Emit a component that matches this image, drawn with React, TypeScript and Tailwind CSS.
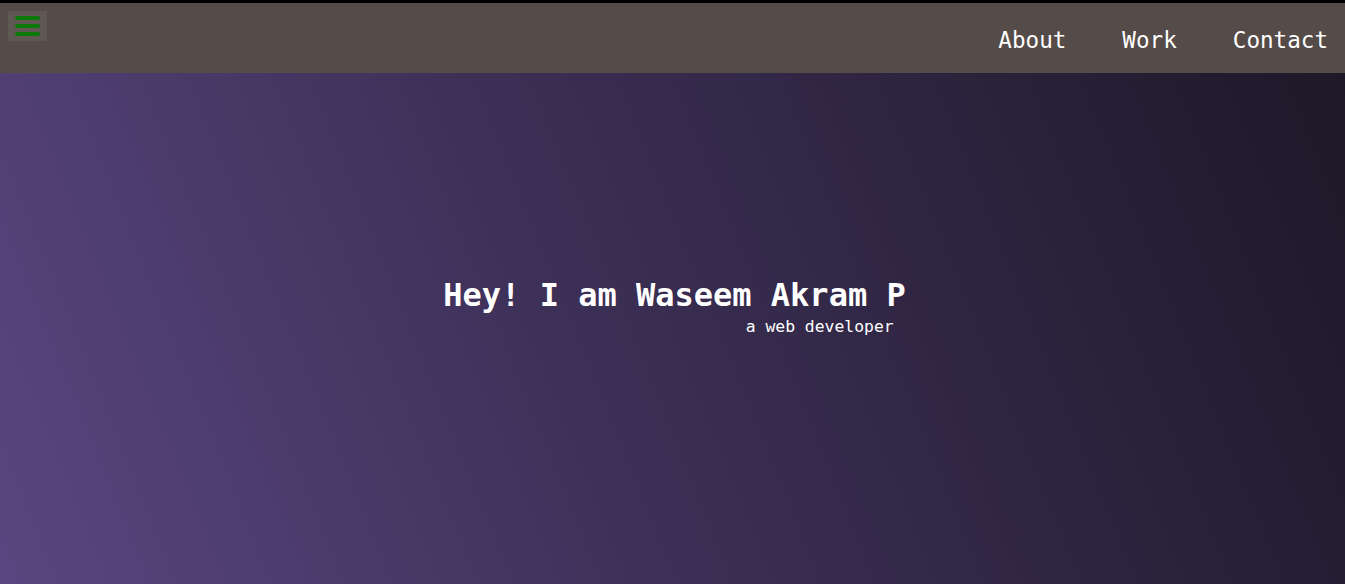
import React from 'react'

const links = ['About', 'Work', 'Contact']

export default function App() {
  return (
    <div className="flex h-[584px] flex-col overflow-hidden font-['DejaVu_Sans_Mono',monospace] text-white">
      <header className="flex h-[73px] shrink-0 items-start justify-between border-t-[3px] border-black bg-[#554b48]">
        <button className="ml-2 mt-2 flex h-[30px] w-[39px] flex-col items-center justify-center gap-[4px] bg-[#5f5752]">
          <span className="h-[4px] w-[25px] rounded-full bg-[#0b7a0b]" />
          <span className="h-[4px] w-[25px] rounded-full bg-[#0b7a0b]" />
          <span className="h-[4px] w-[25px] rounded-full bg-[#0b7a0b]" />
        </button>
        <nav className="mr-[17px] mt-[23px] flex gap-[56px] text-[22.6px] leading-[28px]">
          {links.map((l) => (
            <a key={l} href="#">{l}</a>
          ))}
        </nav>
      </header>
      <main className="flex flex-1 items-center justify-center bg-[linear-gradient(68deg,#5a4680_0%,#3b2f55_45%,#1e1828_100%)] pb-[44px]">
        <div className="ml-[4px] flex flex-col">
          <h1 className="text-[32px] font-bold leading-[38px]">Hey! I am Waseem Akram P</h1>
          <p className="mt-[3px] self-end pr-[12px] text-[16.4px] leading-[20px]">a web developer</p>
        </div>
      </main>
    </div>
  )
}
